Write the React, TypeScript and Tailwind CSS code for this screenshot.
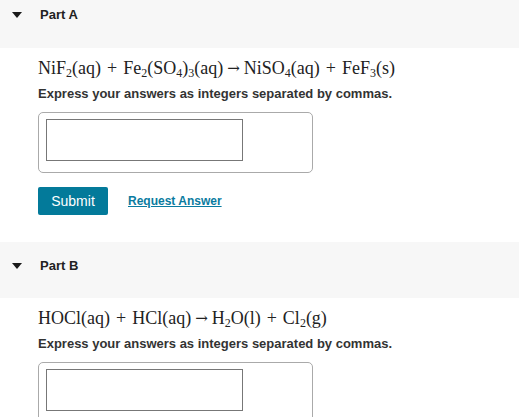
import React from "react";

const Sub = ({ children }: { children: React.ReactNode }) => (
  <span className="text-[12px] relative top-[3px]">{children}</span>
);

const Op = ({ children }: { children: React.ReactNode }) => (
  <span className="mx-[6px]">{children}</span>
);

const Arrow = () => (
  <span
    className="mx-[4px] text-[15px] relative top-[-1px]"
    style={{ fontFamily: '"DejaVu Serif", serif' }}
  >
    →
  </span>
);

function Header({ title, className }: { title: string; className: string }) {
  return (
    <div className={`bg-[#f7f7f7] flex items-center ${className}`}>
      <svg width="10" height="6" viewBox="0 0 10 6" className="ml-[12px]">
        <polygon points="0,0 10,0 5,6" fill="#1a1a1a" />
      </svg>
      <span className="ml-[18px] text-[13px] font-bold text-[#222]">{title}</span>
    </div>
  );
}

function AnswerBox() {
  return (
    <div className="ml-[38px] w-[275px] h-[61px] border border-[#aaa] rounded-[5px] pt-[6px] pl-[7px]">
      <div className="w-[197px] h-[42px] border border-[#777] bg-white" />
    </div>
  );
}

const prompt = "Express your answers as integers separated by commas.";
const serif = { fontFamily: '"Liberation Serif", "Times New Roman", serif' };

export default function App() {
  return (
    <div
      className="w-[519px] h-[417px] overflow-hidden bg-white text-[#333]"
      style={{ fontFamily: '"Liberation Sans", Arial, sans-serif' }}
    >
      <Header title="Part A" className="h-[48px] pb-[18px]" />
      <div className="pl-[38px] pt-[9px] text-[18px] text-[#222] leading-[22px] h-[31px]" style={serif}>
        NiF<Sub>2</Sub>(aq)<Op>+</Op>Fe<Sub>2</Sub>(SO<Sub>4</Sub>)<Sub>3</Sub>(aq)
        <Arrow />NiSO<Sub>4</Sub>(aq)<Op>+</Op>FeF<Sub>3</Sub>(s)
      </div>
      <div className="pl-[38px] text-[13px] font-bold leading-[16px] mt-[7px]">{prompt}</div>
      <div className="mt-[10px]">
        <AnswerBox />
      </div>
      <div className="flex items-center mt-[14px] ml-[38px]">
        <button className="w-[70px] h-[28px] bg-[#037a9a] text-white text-[14px] rounded-[2px]">
          Submit
        </button>
        <a className="ml-[20px] text-[12px] font-bold text-[#0a7ba0] underline">Request Answer</a>
      </div>
      <div className="h-[27px]" />
      <Header title="Part B" className="h-[56px] pb-[8px]" />
      <div className="pl-[38px] pt-[9px] text-[18px] text-[#222] leading-[22px] h-[31px]" style={serif}>
        HOCl(aq)<Op>+</Op>HCl(aq)<Arrow />H<Sub>2</Sub>O(l)<Op>+</Op>Cl<Sub>2</Sub>(g)
      </div>
      <div className="pl-[38px] text-[13px] font-bold leading-[16px] mt-[7px]">{prompt}</div>
      <div className="mt-[10px]">
        <AnswerBox />
      </div>
    </div>
  );
}
